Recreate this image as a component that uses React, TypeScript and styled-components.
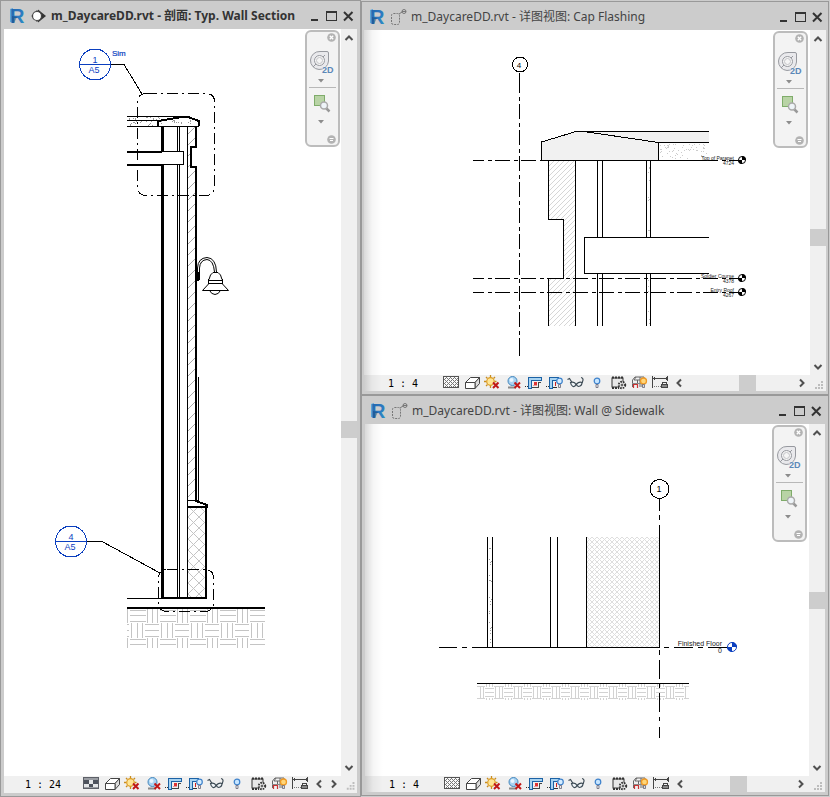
import React, { ReactNode } from "react";
import styled, { createGlobalStyle } from "styled-components";

const GlobalStyle = createGlobalStyle`
  *, *::before, *::after { box-sizing: border-box; }
  body { margin: 0; background: #cccccc; }
`;

const uiFont = `"Noto Sans", "Open Sans", "Noto Sans CJK SC", sans-serif`;

const Workspace = styled.main`
  display: grid;
  grid-template-columns: 361fr 469fr;
  height: 100vh;
  min-height: 480px;
  background: #cccccc;
  font-family: ${uiFont};
`;

const DetailColumn = styled.div`
  display: grid;
  grid-template-rows: minmax(0, 394fr) minmax(0, 402fr);
  padding: 1px 1px 0 0;
  min-width: 0;
  min-height: 0;
`;

const WindowFrame = styled.section<{ $frame: number; $bottomGap: number }>`
  display: flex;
  flex-direction: column;
  min-width: 0;
  min-height: 0;
  margin-bottom: ${(p) => p.$bottomGap}px;
  padding: 0 ${(p) => p.$frame}px 3px;
  border: 1px solid #999999;
  background: #cccccc;
`;

const TitleBar = styled.header`
  display: flex;
  align-items: center;
  flex: none;
  gap: 4px;
  height: 28px;
  padding: 2px 0 0 4px;
`;

const Title = styled.h2<{ $active: boolean }>`
  flex: 1;
  min-width: 0;
  margin: 0;
  overflow: hidden;
  white-space: nowrap;
  color: ${(p) => (p.$active ? "#333333" : "#444444")};
  font-size: 12px;
  font-weight: ${(p) => (p.$active ? 700 : 400)};
  line-height: 20px;
`;

const PlainButton = styled.button`
  display: flex;
  align-items: center;
  justify-content: center;
  flex: none;
  padding: 0;
  border: 0;
  background: transparent;
`;

const ButtonRow = styled.div`
  display: flex;
`;

const CaptionButton = styled(PlainButton)`
  width: 17px;
  height: 20px;
`;

const Body = styled.div`
  display: flex;
  flex: 1;
  min-height: 0;
`;

const shade = "linear-gradient(to right, rgba(0,0,0,0.15), rgba(0,0,0,0.04) 8px, rgba(0,0,0,0) 18px)";

const Canvas = styled.div<{ $shaded: boolean }>`
  position: relative;
  display: grid;
  grid-template-rows: minmax(0, 1fr);
  flex: 1;
  min-width: 0;
  background: ${(p) => (p.$shaded ? `${shade}, #ffffff` : "#ffffff")};
`;

const Drawing = styled.svg`
  display: block;
  width: 100%;
  height: 100%;
  font-family: "Liberation Sans", Arial, sans-serif;
`;

const VerticalScroll = styled.div<{ $before: number; $after: number }>`
  display: grid;
  grid-template-rows: 17px ${(p) => p.$before}fr 17px ${(p) => p.$after}fr 17px;
  flex: none;
  width: 16px;
  background: #f0f0f0;
`;

const ScrollCell = styled(PlainButton)`
  width: 16px;
  height: 17px;
`;

const Thumb = styled.div`
  background: #cdcdcd;
`;

const StatusBar = styled.footer<{ $shaded: boolean; $tall: boolean }>`
  display: flex;
  flex: none;
  height: ${(p) => (p.$tall ? 17 : 16)}px;
  background: ${(p) => (p.$shaded ? `${shade}, #f0f0f0` : "#f0f0f0")};
`;

const Scale = styled.span<{ $active: boolean }>`
  flex: none;
  width: 76px;
  padding-left: ${(p) => (p.$active ? 21 : 24)}px;
  color: #000000;
  font-family: "DejaVu Sans Mono", monospace;
  font-size: 10px;
  line-height: 17px;
  white-space: nowrap;
`;

const ToolButton = styled(PlainButton)`
  width: 21px;
  height: 16px;
`;

const ScrollButton = styled(PlainButton)`
  flex: 0 1 16px;
  min-width: 12px;
  height: 16px;
`;

const HorizontalTrack = styled.div<{ $before: number; $after: number }>`
  display: grid;
  grid-template-columns: ${(p) => p.$before}fr 17px ${(p) => p.$after}fr;
  flex: 1;
`;

const HorizontalThumb = styled(Thumb)`
  grid-column: 2;
`;

const NavBar = styled.nav<{ $inset: number }>`
  position: absolute;
  top: 1px;
  right: ${(p) => p.$inset}px;
  display: flex;
  flex-direction: column;
  width: 35px;
  height: 117px;
  border: 2px solid #bcbcbc;
  border-radius: 6px;
  background: #f3f3f3;
`;

const NavCorner = styled(PlainButton)<{ $bottom?: boolean }>`
  align-self: flex-end;
  width: 11px;
  height: 10px;
  margin-top: ${(p) => (p.$bottom ? "auto" : "0")};
  margin-right: 1px;
  margin-bottom: ${(p) => (p.$bottom ? 1 : 2)}px;
`;

const NavTool = styled(PlainButton)<{ $height: number }>`
  width: 31px;
  height: ${(p) => p.$height}px;
`;

const NavMenu = styled(PlainButton)`
  width: 28px;
  height: 8px;
`;

const NavRule = styled.div`
  height: 1px;
  margin: 2px 2px 4px;
  background: #b8b8b8;
`;

/* ---------- icons ---------- */

function AppLogo({ id }: { id: string }) {
  return (
    <svg width="18" height="26" viewBox="0 0 18 26" aria-hidden="true">
      <defs>
        <linearGradient id={id} x1="0" y1="0" x2="1" y2="1">
          <stop offset="0" stopColor="#1d5fa8" />
          <stop offset="0.5" stopColor="#2c78c0" />
          <stop offset="1" stopColor="#2a93c4" />
        </linearGradient>
      </defs>
      <path d="M2 6 5 5V20L2 19Z" fill="#5aa5dc" />
      <text x="2" y="20" fontFamily="Liberation Sans, Arial, sans-serif" fontWeight="700" fontSize="20" fill={`url(#${id})`}>R</text>
      <path d="M4 13 9 14 6 20 4 20Z" fill="#15457c" opacity="0.5" />
    </svg>
  );
}

const SectionIcon = () => (
  <svg width="17" height="16" viewBox="0 0 17 16" aria-hidden="true">
    <path d="M8 1.500 16 8 8 14.500Z" fill="#333" />
    <circle cx="7" cy="8" r="4.500" fill="#fff" stroke="#444" strokeWidth="1.200" />
    <path d="M7 2V3.500M7 12.500V14M1.500 8H3" stroke="#444" />
  </svg>
);

const DetailIcon = () => (
  <svg width="17" height="16" viewBox="0 0 17 16" fill="none" stroke="#777" aria-hidden="true">
    <rect x="1.500" y="4.500" width="8" height="11" rx="2" strokeDasharray="2 1" />
    <path d="M9 5 12 3" />
    <circle cx="14" cy="2.500" r="2" />
    <path d="M12 2.500H16" />
  </svg>
);

function Chevron({ dir }: { dir: "up" | "down" | "left" | "right" }) {
  const d = {
    up: "M1.500 7 5 3.500 8.500 7",
    down: "M1.500 3 5 6.500 8.500 3",
    left: "M7 1.500 3.500 5 7 8.500",
    right: "M3 1.500 6.500 5 3 8.500",
  }[dir];
  return (
    <svg width="10" height="10" viewBox="0 0 10 10" aria-hidden="true">
      <path d={d} fill="none" stroke="#505050" strokeWidth="2" />
    </svg>
  );
}

const Grip = () => (
  <svg width="16" height="16" viewBox="0 0 16 16" fill="#bdbdbd" aria-hidden="true">
    <path d="M11 6h2v2h-2zM8 9h2v2H8zM11 9h2v2h-2zM5 12h2v2H5zM8 12h2v2H8zM11 12h2v2h-2z" />
  </svg>
);

const RedCross = () => <path d="M11 7.500 16.500 13M16.500 7.500 11 13" stroke="#c01818" strokeWidth="2" />;

const Bulb = ({ x, fill, stroke }: { x: number; fill: string; stroke: string }) => (
  <g>
    <circle cx={x} cy="6" r="2.800" fill={fill} stroke={stroke} strokeWidth="1.200" />
    <path d={`M${x - 1} 9.500h2v3h-2z`} fill="#eee" stroke="#667" strokeWidth=".8" />
  </g>
);

const CropFrame = () => (
  <g fill="none" shapeRendering="crispEdges">
    <path d="M4.500 13.500V2.500H17.500V5.500H7.500V13.500Z" fill="#a9d4f2" stroke="#1c62a5" />
    <path d="M1 11.500H2M3 11.500H4" stroke="#333" />
    <path d="M8 12.500H15M14.500 12V7.500H17" stroke="#444" />
    <path d="M10 8.500H12.500" stroke="#d33" strokeWidth="3" />
    <path d="M9 10.500H13" stroke="#e99" />
  </g>
);

function CheckerIcon() {
  let d = "";
  for (let y = 2; y < 12; y++)
    for (let x = 4; x < 18; x++)
      if (x % 4 === (y % 4) || x % 4 === (4 - (y % 4)) % 4) d += `M${x} ${y}h1v1h-1z`;
  return (
    <g shapeRendering="crispEdges">
      <rect x="3.500" y="1.500" width="15" height="11" fill="#fafafa" stroke="#555" />
      <path d={d} fill="#777" />
    </g>
  );
}

const CoarseIcon = () => (
  <g shapeRendering="crispEdges">
    <rect x="3.500" y="1.500" width="15" height="11" fill="#e4e6e8" stroke="#5d6068" />
    <path d="M4 2h14v2H4z" fill="#9a9da3" />
    <path d="M4 4h5v4H4zM13 4h5v4h-5zM9 8h4v3H9z" fill="#4d525c" />
    <path d="M4 11h14v1H4z" fill="#9a9da3" />
  </g>
);

const viewTools: { label: string; icon: ReactNode }[] = [
  {
    label: "Visual style",
    icon: (
      <g fill="#fff" stroke="#444" strokeLinejoin="round">
        <path d="M4.500 7.500 9.500 2.500H18.500L14 7.500Z" />
        <path d="M14 7.500 18.500 2.500V8.500L14 13.500Z" fill="#ddd" />
        <path d="M4.500 7.500H14V13.500H4.500Z" />
      </g>
    ),
  },
  {
    label: "Sun path",
    icon: (
      <g>
        <path d="M8.500 0V2M8.500 10.500V13M2 6.500H4M4 2 5.500 3.500M13 2 11.500 3.500M4 11 5.500 9.500M13 6.500H14.500" stroke="#c98d1d" strokeWidth="1.300" />
        <circle cx="8.500" cy="6.500" r="3.800" fill="#ffe695" stroke="#dc9a20" strokeWidth="1.200" />
        <RedCross />
      </g>
    ),
  },
  {
    label: "Shadows",
    icon: (
      <g>
        <path d="M5 12.500H13" stroke="#8b8b8b" strokeWidth="2" />
        <circle cx="9.500" cy="6" r="4.500" fill="#a9d3f2" stroke="#4487bd" />
        <circle cx="8.500" cy="5" r="2" fill="#e8f5ff" />
        <path d="M11.500 7.500 17 13M17 7.500 11.500 13" stroke="#c01818" strokeWidth="2" />
      </g>
    ),
  },
  { label: "Crop view", icon: <CropFrame /> },
  {
    label: "Show crop region",
    icon: (
      <g>
        <path d="M4.500 13.500V2.500H13.500V5.500H7.500V13.500Z" fill="#a9d4f2" stroke="#1c62a5" shapeRendering="crispEdges" />
        <path d="M1 11.500H2M3 11.500H4M8 12.500H12" stroke="#333" shapeRendering="crispEdges" />
        <path d="M10.500 7V11" stroke="#c22" />
        <Bulb x={14.500} fill="#d6edff" stroke="#3f83cc" />
      </g>
    ),
  },
  {
    label: "Temporary hide/isolate",
    icon: (
      <g fill="#eef3f6" stroke="#3c4a54" strokeWidth="1.200">
        <path d="M1.500 4.500 3.500 3.500 6 7.500M15 2.500Q18.500 3 16 8" fill="none" />
        <path d="M4.500 7.500Q8.500 6 10 9.500 9 12 7 11.500 5 10.500 4.500 7.500ZM10.500 9Q13 6.500 16 7.500 16 11 12.500 11.500 10.500 11 10.500 9Z" />
      </g>
    ),
  },
  { label: "Reveal hidden elements", icon: <Bulb x={10} fill="#c7e5ff" stroke="#3f83cc" /> },
  {
    label: "Temporary view properties",
    icon: (
      <g fill="none" stroke="#333">
        <rect x="4" y="3" width="11" height="9" fill="#e7e7e7" strokeWidth="1" />
        <path d="M4 2.500H15" strokeDasharray="2 1" strokeWidth="2" />
        <path d="M4 13H11" strokeDasharray="2 1" strokeWidth="2" />
        <circle cx="14" cy="10" r="3.200" fill="#fff" strokeDasharray="1.600 1" strokeWidth="2" />
        <circle cx="14" cy="10" r="1" />
      </g>
    ),
  },
  {
    label: "Analytical model",
    icon: (
      <g fill="none">
        <path d="M3.500 12V5L6 2H15V7M7 2 5 5H13V12M8.500 5V12M11 2V12" stroke="#666" />
        <path d="M3 8.500H13" stroke="#888" />
        <path d="M4.500 13V9M8.500 13V9M4 9.500H9" stroke="#c33" strokeWidth="1.200" />
        <circle cx="14.500" cy="6" r="3" fill="#ffd67a" stroke="#ef9a25" strokeWidth="1.300" />
        <path d="M13.500 9.500h2v3h-2z" fill="#ddd" stroke="#667" strokeWidth=".8" />
      </g>
    ),
  },
  {
    label: "Reveal constraints",
    icon: (
      <g fill="none" stroke="#444" shapeRendering="crispEdges">
        <path d="M2.500 1V13M17.500 1V6M3 3.500H17M4 2V5M16 2V5" />
        <path d="M4 11.500H11" stroke="#777" strokeDasharray="1 1" />
        <path d="M12.500 9V7.500H16.500V9" />
        <rect x="11.500" y="9.500" width="6" height="3" fill="#888" />
      </g>
    ),
  },
];

/* ---------- view navigation ---------- */

const DownArrow = () => (
  <svg width="6" height="4" viewBox="0 0 6 4" aria-hidden="true">
    <path d="M0 0H6L3 3.500Z" fill="#8c8c8c" />
  </svg>
);

const Navigation = ({ inset }: { inset: number }) => (
  <NavBar $inset={inset} aria-label="Navigation bar">
    <NavCorner type="button" aria-label="Close navigation bar">
      <svg width="9" height="9" viewBox="0 0 9 9" aria-hidden="true">
        <circle cx="4.500" cy="4.500" r="4.300" fill="#b3b3b3" />
        <path d="M2.800 2.800 6.200 6.200M6.200 2.800 2.800 6.200" stroke="#fff" strokeWidth="1.300" />
      </svg>
    </NavCorner>
    <NavTool type="button" $height={33} aria-label="Steering wheel 2D">
      <svg width="31" height="33" viewBox="2 14 31 33" aria-hidden="true">
        <path d="M15 21.500H22Q23.500 21.500 23.500 23V31A9 9 0 1 1 15 21.500Z" fill="#e9e9ec" stroke="#97999f" />
        <circle cx="14.500" cy="30.500" r="5" fill="#f5f5f5" stroke="#97999f" />
        <circle cx="14.500" cy="30.500" r="3" fill="none" stroke="#c4c4c8" />
        <path d="M8 37 11 34M18 27 20 25" stroke="#97999f" />
        <text x="17" y="43" fontSize="9" fontWeight="700" fontFamily="Liberation Sans, Arial, sans-serif" fill="#5b88b8" stroke="#f3f3f3" strokeWidth="1" paintOrder="stroke">2D</text>
      </svg>
    </NavTool>
    <NavMenu type="button" aria-label="Steering wheel options"><DownArrow /></NavMenu>
    <NavRule />
    <NavTool type="button" $height={26} aria-label="Zoom in region">
      <svg width="31" height="26" viewBox="2 62 31 26" aria-hidden="true">
        <rect x="9.500" y="65.500" width="10" height="10" fill="#b8d3a5" stroke="#7fac6a" />
        <path d="M21 78 24.500 81.500" stroke="#999" strokeWidth="2.500" />
        <circle cx="19" cy="75.500" r="3.500" fill="#eef4f8" stroke="#aaa" strokeWidth="1.500" />
      </svg>
    </NavTool>
    <NavMenu type="button" aria-label="Zoom options"><DownArrow /></NavMenu>
    <NavCorner type="button" $bottom aria-label="Customize navigation bar">
      <svg width="9" height="9" viewBox="0 0 9 9" aria-hidden="true">
        <circle cx="4.500" cy="4.500" r="4.300" fill="#b3b3b3" />
        <path d="M2.500 3.500H6.500M3 5.500H6" stroke="#fff" />
      </svg>
    </NavCorner>
  </NavBar>
);

/* ---------- window ---------- */

const WindowButtons = () => (
  <ButtonRow>
    <CaptionButton type="button" aria-label="Minimize">
      <svg width="11" height="11" viewBox="0 0 11 11" aria-hidden="true"><path d="M2 9H9" stroke="#333" strokeWidth="2" /></svg>
    </CaptionButton>
    <CaptionButton type="button" aria-label="Maximize">
      <svg width="11" height="11" viewBox="0 0 11 11" shapeRendering="crispEdges" aria-hidden="true">
        <path d="M0.500 1V9.500H10.500V1" fill="none" stroke="#333" />
        <path d="M0 1H11" stroke="#333" strokeWidth="2" />
      </svg>
    </CaptionButton>
    <CaptionButton type="button" aria-label="Close">
      <svg width="11" height="11" viewBox="0 0 11 11" aria-hidden="true"><path d="M1 1 9.500 9.500M9.500 1 1 9.500" stroke="#333" strokeWidth="2" /></svg>
    </CaptionButton>
  </ButtonRow>
);

type ViewWindowProps = {
  id: string;
  title: string;
  scale: string;
  active?: boolean;
  frame: number;
  bottomGap?: number;
  vertical: [number, number];
  horizontal?: [number, number];
  children: ReactNode;
};

function ViewWindow(p: ViewWindowProps) {
  const active = !!p.active;
  return (
    <WindowFrame $frame={p.frame} $bottomGap={p.bottomGap ?? 0} aria-label={p.title}>
      <TitleBar>
        <AppLogo id={`${p.id}-logo`} />
        {active ? <SectionIcon /> : <DetailIcon />}
        <Title $active={active}>{p.title}</Title>
        <WindowButtons />
      </TitleBar>
      <Body>
        <Canvas $shaded={!active}>
          {p.children}
          <Navigation inset={active ? 1 : 2} />
        </Canvas>
        <VerticalScroll $before={p.vertical[0]} $after={p.vertical[1]}>
          <ScrollCell type="button" aria-label="Scroll up"><Chevron dir="up" /></ScrollCell>
          <span />
          <Thumb />
          <span />
          <ScrollCell type="button" aria-label="Scroll down"><Chevron dir="down" /></ScrollCell>
        </VerticalScroll>
      </Body>
      <StatusBar $shaded={!active} $tall={active}>
        <Scale $active={active}>{p.scale}</Scale>
        <ToolButton type="button" aria-label="Detail level">
          <svg width="21" height="16" viewBox="0 0 21 16" aria-hidden="true">{active ? <CoarseIcon /> : <CheckerIcon />}</svg>
        </ToolButton>
        {viewTools.map((t) => (
          <ToolButton key={t.label} type="button" aria-label={t.label}>
            <svg width="21" height="16" viewBox="0 0 21 16" aria-hidden="true">{t.icon}</svg>
          </ToolButton>
        ))}
        <ScrollButton type="button" aria-label="Scroll left"><Chevron dir="left" /></ScrollButton>
        {p.horizontal && (
          <HorizontalTrack $before={p.horizontal[0]} $after={p.horizontal[1]}>
            <HorizontalThumb />
          </HorizontalTrack>
        )}
        <ScrollButton type="button" aria-label="Scroll right"><Chevron dir="right" /></ScrollButton>
        <Grip />
      </StatusBar>
    </WindowFrame>
  );
}

/* ---------- drawings ---------- */

function Stipple({ x, y, w, h, n, color }: { x: number; y: number; w: number; h: number; n: number; color: string }) {
  let seed = x * 31 + y * 17;
  const next = () => (seed = (seed * 1103 + 12345) % 65521) / 65521;
  let d = "";
  for (let i = 0; i < n; i++) d += `M${x + Math.floor(next() * w)} ${y + Math.floor(next() * h)}h1v1h-1z`;
  return <path d={d} fill={color} stroke="none" />;
}

const blue = "#0b3fbf";

function Callout({ cx, cy, top, bottom }: { cx: number; cy: number; top: string; bottom: string }) {
  return (
    <g>
      <circle cx={cx} cy={cy} r="15.500" fill="#fff" stroke={blue} shapeRendering="crispEdges" />
      <path d={`M${cx - 15.5} ${cy}h31`} stroke={blue} />
      <g fill={blue} stroke="none" fontSize="9" textAnchor="middle">
        <text x={cx} y={cy - 2}>{top}</text>
        <text x={cx - 1} y={cy + 8}>{bottom}</text>
      </g>
    </g>
  );
}

const SectionDrawing = () => (
  <Drawing viewBox="4 29 337 747" preserveAspectRatio="xMinYMin meet" role="img" aria-label="Typical wall section">
    <defs>
      <pattern id="brick" x="188" y="4" width="8" height="11" patternUnits="userSpaceOnUse">
        <path d="M0 9 8 1" stroke="#a8a8a8" shapeRendering="crispEdges" />
      </pattern>
      <pattern id="block" x="188" y="506" width="11" height="11" patternUnits="userSpaceOnUse">
        <path d="M0 0 11 11M11 0 0 11" stroke="#c4c4c4" shapeRendering="crispEdges" />
      </pattern>
      <pattern id="earth" x="129" y="609" width="30" height="29" patternUnits="userSpaceOnUse">
        <path d="M1 1.500H17M1 6.500H17M1 12.500H17M18.500 0V14M23.500 0V14M28.500 0V14M2.500 14V29M8.500 14V29M13.500 14V29M16 15.500H30M16 21.500H30M16 27.500H30" stroke="#c4c4c4" />
      </pattern>
    </defs>
    <g fill="none" stroke="#000" shapeRendering="crispEdges">
      <rect x="188" y="127" width="8" height="374" fill="url(#brick)" stroke="none" />
      <rect x="191" y="148" width="7" height="19" fill="#fff" stroke="none" />
      <rect x="188" y="508" width="17" height="89" fill="url(#block)" stroke="none" />
      <rect x="127" y="609" width="138" height="39" fill="url(#earth)" stroke="none" />
      <Stipple x={127} y={117} w={38} h={9} n={34} color="#999" />
      <path d="M127 116.500H180M127 120.500H158M127 126.500H158" />
      <path d="M158 121 182 117H188L199 121V126" fill="#fff" strokeWidth="2" />
      <path d="M158 120V127" strokeWidth="2" />
      <path d="M158 126.500H199" />
      <Stipple x={165} y={120} w={26} h={4} n={14} color="#999" />
      <path d="M162 127V152M162 165V599" strokeWidth="3" />
      <path d="M127 152H162M127 165H162M162 598H206" strokeWidth="2" />
      <path d="M162 151.500H183.500V164.500H162M177.500 127V151M179.500 127V151M177.500 165V598M179.500 165V598M187.500 127V598" />
      <path d="M196 127V147H191V167H196V501L207 505V507H188M206 507V599" strokeWidth="2" />
      <path d="M188 500.500H196M198.500 377V502M127 598.500H162" />
      <path d="M127 608H265" strokeWidth="2" />
      <rect x="137.500" y="93.500" width="77" height="102" rx="8" strokeDasharray="11 4 2 4" />
      <rect x="158.500" y="569.500" width="55" height="42" rx="8" strokeDasharray="11 4 2 4" />
      <path d="M110 64.500H124L142 94M86 541.500H102L160 573" />
    </g>
    <g fill="none" stroke="#000">
      <path d="M197.500 280V268Q198 258 207 257.500 216 258 216.500 272M199.500 280V268Q200 260 207 259.500 213.500 260 214.500 272" />
      <path d="M198 272V281" strokeWidth="2" />
      <path d="M209 279.500Q210 274 213 272.500H218Q221 274 222 279.500M208.500 280.500H222M208.500 283.500H222M208.500 279V284L202.500 290.500H228.500L222.500 284V279M210 291Q211 294 215 294.500 219 294 220 291" />
    </g>
    <Callout cx={95} cy={64.500} top="1" bottom="A5" />
    <Callout cx={71} cy={541.500} top="4" bottom="A5" />
    <text x="112" y="56" fontSize="8" fill={blue} stroke={blue} strokeWidth=".2">Sim</text>
  </Drawing>
);

function LevelMark({ x, y, r, color }: { x: number; y: number; r: number; color: string }) {
  return (
    <g>
      <circle cx={x} cy={y} r={r - 0.5} fill="#fff" stroke={color} />
      <path d={`M${x} ${y}V${y - r}A${r} ${r} 0 0 1 ${x + r} ${y}ZM${x} ${y}V${y + r}A${r} ${r} 0 0 1 ${x - r} ${y}Z`} fill={color} />
    </g>
  );
}

function Level({ y, name, value }: { y: number; name: string; value: string }) {
  return (
    <g>
      <path d={`M473 ${y}H738`} stroke="#000" strokeDasharray="15 4 4 3" strokeDashoffset="4" shapeRendering="crispEdges" />
      <g fontSize="5" textAnchor="end" fill="#222">
        <text x="734" y={y - 1}>{name}</text>
        <text x="734" y={y + 4}>{value}</text>
      </g>
      <LevelMark x={742} y={y - 0.5} r={4} color="#000" />
    </g>
  );
}

const FlashingDrawing = () => (
  <Drawing viewBox="364 30 446 345" preserveAspectRatio="xMinYMin meet" role="img" aria-label="Cap flashing detail">
    <defs>
      <pattern id="fineBrick" x="0" y="0" width="5" height="5" patternUnits="userSpaceOnUse">
        <path d="M-1 6 6 -1" stroke="#d6d6d6" shapeRendering="crispEdges" />
      </pattern>
    </defs>
    <g fill="none" stroke="#000" shapeRendering="crispEdges">
      <path d="M549 161H575V326H549V278H564V220H549Z" fill="url(#fineBrick)" stroke="none" />
      <path d="M576 131.500H709V142.500H658.500Z" fill="#f1f1f1" stroke="none" />
      <Stipple x={659} y={144} w={48} h={15} n={60} color="#ccc" />
      <Stipple x={648} y={162} w={2} h={72} n={9} color="#bbb" />
      <Stipple x={648} y={276} w={2} h={48} n={6} color="#bbb" />
      <path d="M709 131.500H576L541.500 142V160.500H658.500V142.500L584 131.500" fill="#f1f1f1" />
      <path d="M658.500 142.500H709M541 160.500H718" />
      <path d="M548.500 161V219.500H563.500V278.500H548.500V326M575.500 161V326" />
      <path d="M597.500 161V237M602.500 161V237M646.500 161V237M650.500 161V237M597.500 274V326M602.500 274V326M646.500 274V326M650.500 274V326" />
      <path d="M709 237.500H584.500V273.500H709" />
      <path d="M519.500 73V93M519.500 350V356" />
      <path d="M519.500 97V353" strokeDasharray="4 3 15 4" />
      <circle cx="520" cy="64.500" r="7.500" fill="#fff" />
    </g>
    <text x="519" y="68" fontSize="8" textAnchor="middle">4</text>
    <Level y={160.500} name="Top of Parapet" value="4724" />
    <Level y={278.500} name="Soldier Course" value="4378" />
    <Level y={292.500} name="Entry Roof" value="4267" />
  </Drawing>
);

const SidewalkDrawing = () => (
  <Drawing viewBox="365 424 444 352" preserveAspectRatio="xMinYMin meet" role="img" aria-label="Wall at sidewalk detail">
    <defs>
      <pattern id="fineBlock" x="587" y="537" width="5" height="5" patternUnits="userSpaceOnUse">
        <path d="M0 0 5 5M5 0 0 5" stroke="#dedede" shapeRendering="crispEdges" />
      </pattern>
      <pattern id="fineEarth" x="485" y="687" width="19" height="20" patternUnits="userSpaceOnUse">
        <path d="M0 1.500H9M0 5.500H9M0 9.500H9M10.500 0V11M14.500 0V11M17.500 0V11M1.500 11V20M4.500 11V20M7.500 11V20M9 11.500H19M9 15.500H19M9 19.500H19" stroke="#d2d2d2" />
      </pattern>
    </defs>
    <g fill="none" stroke="#000" shapeRendering="crispEdges">
      <rect x="587" y="537" width="72" height="110" fill="url(#fineBlock)" stroke="none" />
      <rect x="477" y="684" width="212" height="16" fill="url(#fineEarth)" stroke="none" />
      <Stipple x={489} y={538} w={3} h={108} n={24} color="#999" />
      <path d="M487.500 537V647M492.500 537V647M550.500 537V647M557.500 537V647M586.500 537V647M477 683.500H689" />
      <path d="M659.500 499V511M659.500 515V520M659.500 525V647M659.500 650V655M659.500 660V679M659.500 684V688M659.500 693V712M659.500 717V721M659.500 727V738" />
      <path d="M439 647.500H457M462 647.500H467M472 647.500H660M664 647.500H669M674 647.500H693M698 647.500H703M708 647.500H727" />
      <circle cx="659.500" cy="489" r="9.500" fill="#fff" />
    </g>
    <text x="659" y="492" fontSize="9" textAnchor="middle">1</text>
    <g fontSize="7" textAnchor="end" fill="#222">
      <text x="722" y="646">Finished Floor</text>
      <text x="722" y="653">0</text>
    </g>
    <LevelMark x={732} y={647} r={5} color={blue} />
  </Drawing>
);

export default function App() {
  return (
    <>
      <GlobalStyle />
      <Workspace>
        <ViewWindow id="section" title="m_DaycareDD.rvt - 剖面: Typ. Wall Section" scale="1 : 24" active frame={3} vertical={[375, 321]}>
          <SectionDrawing />
        </ViewWindow>
        <DetailColumn>
          <ViewWindow id="flashing" title="m_DaycareDD.rvt - 详图视图: Cap Flashing" scale="1 : 4" frame={2} vertical={[182, 112]} horizontal={[52, 38]}>
            <FlashingDrawing />
          </ViewWindow>
          <ViewWindow id="sidewalk" title="m_DaycareDD.rvt - 详图视图: Wall @ Sidewalk" scale="1 : 4" frame={3} bottomGap={1} vertical={[151, 150]} horizontal={[42, 47]}>
            <SidewalkDrawing />
          </ViewWindow>
        </DetailColumn>
      </Workspace>
    </>
  );
}
